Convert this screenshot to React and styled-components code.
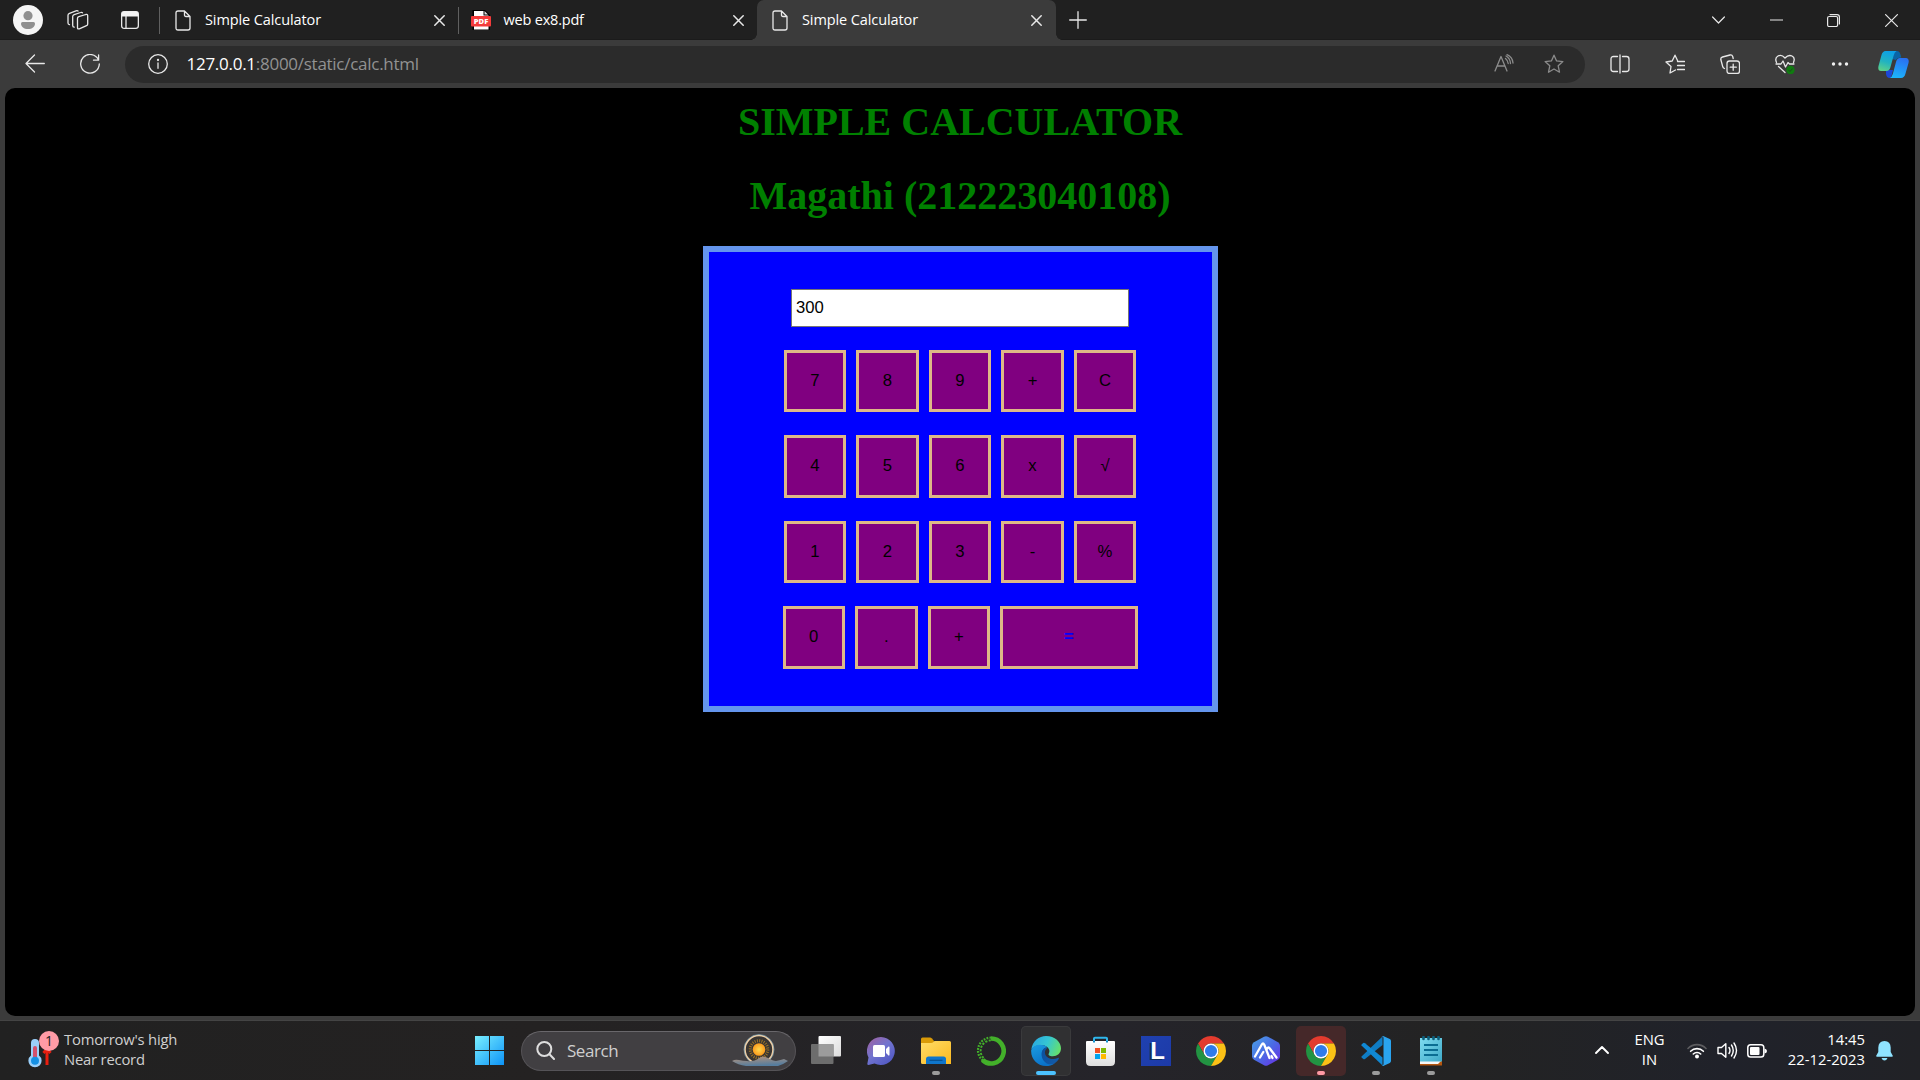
import React from "react";
import styled, { createGlobalStyle } from "styled-components";

const GlobalStyle = createGlobalStyle`
  * { box-sizing: border-box; }
  body { margin: 0; background: #3b3b3b; overflow: hidden; }
  svg { display: block; flex: none; }
`;

const Desktop = styled.div`
  width: 1920px;
  height: 1080px;
  display: flex;
  flex-direction: column;
  background: #3b3b3b;
  font-family: "Open Sans", "Noto Sans", sans-serif;
  color: #fff;
`;

/* ---------- browser window ---------- */

const TabStrip = styled.div`
  height: 40px;
  display: flex;
  background: #202020;
  box-shadow: inset 0 -1px 0 #1b1b1b;
`;

const StripTools = styled.div`
  width: 159px;
  display: flex;
  align-items: center;
  padding-left: 13px;
`;

const StripIcon = styled.div`
  display: flex;
  justify-content: center;
  width: ${(p) => p.$w}px;
`;

const Tab = styled.div`
  position: relative;
  width: 299px;
  display: flex;
  align-items: center;
  padding: 0 ${(p) => p.$right}px 0 ${(p) => p.$left}px;
  gap: ${(p) => p.$gap || 14}px;
  border-left: ${(p) => (p.$divider ? "1px solid transparent" : "0")};
  border-image: ${(p) =>
    p.$divider ? "linear-gradient(#202020 8px, #606060 8px, #606060 33px, #202020 33px) 1" : "none"};
  background: ${(p) => (p.$active ? "#3b3b3b" : "transparent")};
  border-radius: ${(p) => (p.$active ? "7px 7px 0 0" : "0")};
  &::before, &::after {
    content: "";
    display: ${(p) => (p.$active ? "block" : "none")};
    position: absolute;
    bottom: 0;
    width: 6px;
    height: 6px;
  }
  &::before { left: -6px; background: radial-gradient(circle at 0 0, transparent 5.5px, #3b3b3b 6px); }
  &::after { right: -6px; background: radial-gradient(circle at 100% 0, transparent 5.5px, #3b3b3b 6px); }
`;

const TabTitle = styled.span`
  flex: 1;
  font-size: 14.5px;
  letter-spacing: ${(p) => p.$ls}px;
  line-height: 20px;
  white-space: nowrap;
`;

const NewTab = styled.div`
  width: 44px;
  display: flex;
  align-items: center;
  justify-content: center;
`;

const WindowButtons = styled.div`
  margin-left: auto;
  display: flex;
  align-items: center;
`;

const WindowButton = styled.div`
  width: 57.5px;
  display: flex;
  justify-content: center;
`;

const Toolbar = styled.div`
  height: 48px;
  display: flex;
  align-items: center;
`;

const NavButtons = styled.div`
  width: 125px;
  display: flex;
  gap: 35px;
  padding-left: 25px;
`;

const AddressBar = styled.div`
  width: 1460px;
  height: 37px;
  border-radius: 19px;
  background: #2b2b2b;
  display: flex;
  align-items: center;
  padding: 0 21px 0 22.5px;
`;

const Url = styled.div`
  flex: 1;
  margin-left: 19px;
  font-size: 17px;
  letter-spacing: -0.27px;
  line-height: 24px;
  color: #929292;
`;

const Host = styled.span`
  color: #fff;
`;

const AddressActions = styled.div`
  display: flex;
  gap: 30px;
`;

const ToolButtons = styled.div`
  display: flex;
  align-items: center;
  gap: 35px;
  padding-left: 24.5px;
`;

const CopilotButton = styled.div`
  margin-left: -7px;
`;

/* ---------- calculator page ---------- */

const Page = styled.main`
  height: 928px;
  margin: 0 5px;
  border-radius: 10px;
  background: #000;
  display: flex;
  flex-direction: column;
  align-items: center;
  padding-top: 11px;
`;

const Heading = styled.h1`
  margin: 0 0 ${(p) => p.$gap}px;
  font: bold 40px/46px "Liberation Serif", "Times New Roman", serif;
  color: green;
`;

const Calculator = styled.div`
  width: 515px;
  height: 466px;
  border: 6px solid cornflowerblue;
  background: blue;
  display: flex;
  flex-direction: column;
  align-items: center;
  padding-top: 37px;
  font: 16.67px "Liberation Sans", Arial, sans-serif;
`;

const Display = styled.input`
  width: 338px;
  height: 38px;
  margin: 0 0 22.6px;
  padding: 1px 4px;
  border: 1px solid #767676;
  border-radius: 0;
  background: #fff;
  color: #000;
  font: inherit;
  outline: none;
`;

const KeyRow = styled.div`
  display: flex;
  gap: 10px;
  margin-bottom: 23px;
`;

const Key = styled.button`
  width: ${(p) => (p.$wide ? 137.5 : 62.5)}px;
  height: 62.5px;
  padding: 0;
  border: 3px solid burlywood;
  border-radius: 0;
  background: purple;
  color: ${(p) => (p.$wide ? "blue" : "#000")};
  font: inherit;
  font-weight: ${(p) => (p.$wide ? "bold" : "normal")};
`;

/* ---------- taskbar ---------- */

const Taskbar = styled.footer`
  height: 60px;
  margin-top: 4px;
  border-top: 1px solid #444;
  display: flex;
  align-items: center;
  background: linear-gradient(90deg, #212121 0%, #242222 28%, #25242a 58%, #232323 76%, #20222a 90%, #212226 100%);
`;

const Weather = styled.div`
  width: 465px;
  display: flex;
  align-items: center;
  padding-left: 27px;
  gap: 3px;
`;

const SmallLines = styled.div`
  margin-top: -4px;
  font-size: 14.8px;
  line-height: 20px;
  letter-spacing: ${(p) => p.$ls || 0}px;
  text-align: ${(p) => p.$align || "left"};
  color: ${(p) => p.$color || "#fff"};
  white-space: nowrap;
`;

const StartButton = styled.div`
  width: 56px;
  padding-left: 10px;
`;

const SearchBox = styled.div`
  width: 275px;
  height: 40px;
  border-radius: 20px;
  border: 1px solid #555357;
  border-top-color: #69676b;
  background: #413f42;
  display: flex;
  align-items: center;
  padding: 0 7px 0 14px;
`;

const SearchLabel = styled.span`
  flex: 1;
  margin-left: 12px;
  font-size: 17px;
  letter-spacing: -0.45px;
  color: #cfcfcf;
`;

const AppList = styled.div`
  display: flex;
  gap: 5px;
  margin-left: 5px;
`;

const AppSlot = styled.div`
  position: relative;
  width: 50px;
  height: 50px;
  display: flex;
  align-items: center;
  justify-content: center;
  border-radius: 5px;
  padding-right: ${(p) => p.$nudge || 0}px;
  background: ${(p) => p.$bg || "transparent"};
  box-shadow: ${(p) => (p.$bg === "#303032" ? "inset 0 0 0 1px #3a3a3c" : "none")};
`;

const Running = styled.div`
  position: absolute;
  bottom: 1px;
  width: ${(p) => p.$w}px;
  height: 4px;
  border-radius: 2px;
  background: ${(p) => p.$color};
`;

const LetterTile = styled.div`
  width: 30px;
  height: 30px;
  padding-left: 3px;
  background: linear-gradient(135deg, #1f41b0, #1d3aa8);
  display: flex;
  align-items: center;
  justify-content: center;
  font: bold 24px/30px "Liberation Sans", Arial, sans-serif;
  color: #fff;
  text-shadow: -2px 1px 0 #0e2d5c;
`;

const Tray = styled.div`
  margin-left: auto;
  display: flex;
  align-items: center;
  padding-right: 27px;
`;

const TrayChevron = styled.div`
  margin-bottom: 2px;
`;

const Language = styled.div`
  width: 78px;
  padding-left: 3px;
`;

const Status = styled.div`
  display: flex;
  align-items: center;
  gap: 9.5px;
`;

const Clock = styled.div`
  width: 98px;
  margin-right: 11px;
`;

/* ---------- icons ---------- */

const Line = ({ w = 20, h = 20, color = "#e8e8e8", sw = 1.3, children, vb }) => (
  <svg width={w} height={h} viewBox={vb || `0 0 ${w} ${h}`} fill="none" stroke={color} strokeWidth={sw} strokeLinecap="round" strokeLinejoin="round">
    {children}
  </svg>
);

const FileIcon = () => (
  <Line w={16} h={21}>
    <path d="M1 3Q1 1 3 1H9.5L15 6.5V18Q15 20 13 20H3Q1 20 1 18Z M9.5 1V5Q9.5 6.5 11 6.5H15" />
  </Line>
);

const TabClose = () => (
  <Line w={11} h={11} sw={1.5}>
    <path d="M.8.8 10.2 10.2M10.2.8.8 10.2" />
  </Line>
);

const PdfIcon = () => (
  <svg width="20" height="21" viewBox="0 0 20 21">
    <path d="M1.5 0H14L19 5V20H1.5Z" fill="#000" />
    <path d="M3 1H12.5V5.5H17.5V19.5H3Z" fill="#fff" />
    <path d="M13.5 1V4.5H17Z" fill="#ddd" />
    <rect x="0" y="6" width="20" height="10.5" rx="1" fill="#f33b3b" />
    <text x="10" y="14" textAnchor="middle" fontFamily="Open Sans, sans-serif" fontWeight="800" fontSize="7.6" fill="#fff">PDF</text>
  </svg>
);

const ProfileIcon = () => (
  <svg width="30" height="30" viewBox="0 0 30 30">
    <circle cx="15" cy="15" r="15" fill="#f5f5f5" />
    <circle cx="15" cy="10.7" r="4.6" fill="#8f8f8f" />
    <path d="M8 18.5Q8 17 9.5 17H20.5Q22 17 22 18.5C22 22 19 24 15 24S8 22 8 18.5Z" fill="#8f8f8f" />
  </svg>
);

const WorkspacesIcon = () => (
  <Line w={22} h={21}>
    <path d="M10.5 8.3Q10.5 7 11.8 6.6L18.8 4.5Q20.7 4 20.7 5.8V14Q20.7 15.3 19.5 15.7L12.3 18.8Q10.5 19.4 10.5 17.8Z" />
    <path d="M15.5 2.8Q15 2 13.6 2.5L7.2 4.6Q5.7 5.1 5.7 6.6V15.4Q5.7 17 7.2 17.2" />
    <path d="M11 1Q10.4.4 9 .8L2.5 3.3Q1 3.9 1 5.3V13Q1 14.5 2.5 14.7" />
  </Line>
);

const TabActionsIcon = () => (
  <svg width="18" height="18" viewBox="0 0 18 18">
    <rect x=".65" y=".65" width="16.7" height="16.7" rx="2.5" fill="none" stroke="#e8e8e8" strokeWidth="1.3" />
    <path d="M.6 5.5V3Q.6.6 3 .6H15Q17.4.6 17.4 3V5.5Z" fill="#f2f2f2" />
    <path d="M5 5V17.4" stroke="#e8e8e8" strokeWidth="1.3" />
  </svg>
);

const CopilotIcon = () => (
  <svg width="31" height="27" viewBox="0 0 31 27">
    <defs>
      <linearGradient id="cpA" x1=".6" y1="0" x2=".3" y2="1">
        <stop offset="0" stopColor="#0c9fe8" />
        <stop offset=".55" stopColor="#22b3c0" />
        <stop offset="1" stopColor="#5bd08a" />
      </linearGradient>
      <linearGradient id="cpB" x1=".7" y1="0" x2=".4" y2="1">
        <stop offset="0" stopColor="#2a6ff0" />
        <stop offset="1" stopColor="#1cb4fb" />
      </linearGradient>
    </defs>
    <path d="M16 0H19Q21.5 0 22.3 3L23.3 6.5Q19 6.5 18 9L14 8Z" fill="#0a64a6" />
    <path d="M8 19H15L14 23Q13 27 11 27Q8.500 26.500 8 23Z" fill="#1c48d8" />
    <path d="M7.500 0H18.500Q16.500 1 15.500 5L12.500 16Q11.500 20 8.500 20H3Q-.5 20 .5 15L3.500 4Q4.500.3 7.500 0Z" fill="url(#cpA)" />
    <path d="M22 7H28Q31.500 7.500 30.500 12L27.500 22.500Q26.500 26.800 23 27H11.500Q13.800 26.500 14.800 23L18 11Q19 7 22 7Z" fill="url(#cpB)" />
  </svg>
);

const ThermometerIcon = () => (
  <svg width="34" height="40" viewBox="0 0 34 40">
    <path d="M20 17V34" stroke="#e81f10" strokeWidth="3" />
    <path d="M16.500 22L20 18 23.500 22" fill="none" stroke="#e81f10" strokeWidth="3" />
    <path d="M4 12A4 4 0 0 1 12 12V24.500A6.600 6.600 0 1 1 4 24.500Z" fill="#9bd0fa" />
    <rect x="6" y="15" width="4" height="15" rx="2" fill="#d4506c" />
    <circle cx="8" cy="29.700" r="4" fill="#1590e4" />
    <circle cx="22" cy="10" r="10" fill="#ff9ba6" />
    <text x="22" y="15" textAnchor="middle" fontFamily="Open Sans, sans-serif" fontSize="14" fill="#222">1</text>
  </svg>
);

const WindowsIcon = () => (
  <svg width="29" height="29" viewBox="0 0 29 29">
    <defs>
      <linearGradient id="win" x1="0" y1="0" x2="1" y2="1">
        <stop offset="0" stopColor="#79efff" />
        <stop offset="1" stopColor="#0d93f7" />
      </linearGradient>
    </defs>
    <path d="M0 0H14V14H0ZM15 0H29V14H15ZM0 15H14V29H0ZM15 15H29V29H15Z" fill="url(#win)" />
  </svg>
);

const SunriseIcon = () => (
  <svg width="56" height="34" viewBox="0 0 56 34">
    <defs>
      <radialGradient id="sun"><stop offset="0" stopColor="#ffd84d" /><stop offset="1" stopColor="#fb9a1c" /></radialGradient>
      <linearGradient id="hill" x1="0" y1="0" x2=".3" y2="1"><stop offset="0" stopColor="#b99378" /><stop offset="1" stopColor="#567d9e" /></linearGradient>
    </defs>
    <circle cx="27" cy="15.500" r="14" fill="#393532" stroke="#f3cfa3" strokeWidth="1.600" />
    <circle cx="27" cy="15.500" r="15" fill="none" stroke="#8bb9cf" strokeWidth=".6" />
    <circle cx="27" cy="15.500" r="8.800" fill="none" stroke="#9b7328" strokeWidth="3" strokeDasharray="1 1.300" />
    <circle cx="27" cy="15.500" r="6.300" fill="url(#sun)" />
    <path d="M0 27Q3 25 7 26T15 27Q22 28 27 24Q31 21 36 24T44 27Q49 26 52 25Q54 26 56 27Q52 30 46 32H14Q6 31 0 27Z" fill="url(#hill)" />
  </svg>
);

const TaskViewIcon = () => (
  <svg width="30" height="29" viewBox="0 0 30 29">
    <defs><linearGradient id="tv" x1="0" y1="0" x2="1" y2="1"><stop offset="0" stopColor="#fff" /><stop offset="1" stopColor="#dcdcdc" /></linearGradient></defs>
    <rect x="7.500" y="0" width="22.500" height="20.500" rx="1" fill="url(#tv)" />
    <rect x="0" y="8" width="22.500" height="20" rx="1" fill="#6d6d6d" />
    <rect x="7.500" y="8" width="15" height="12.500" fill="#9c9c9c" />
  </svg>
);

const ChatIcon = () => (
  <svg width="28" height="28" viewBox="0 0 28 28">
    <defs><linearGradient id="chat" x1="0" y1="0" x2=".8" y2="1"><stop offset="0" stopColor="#a35f9c" /><stop offset=".5" stopColor="#7274cf" /><stop offset="1" stopColor="#5058c4" /></linearGradient></defs>
    <path d="M14 0A14 14 0 1 1 7.500 26.500L1.500 28Q0 28 .4 26.500L1.500 20.500A14 14 0 0 1 14 0Z" fill="url(#chat)" />
    <rect x="6" y="8" width="12" height="12" rx="1.500" fill="#fff" />
    <path d="M19 12L21.500 9.500Q22.500 9 22.500 10.500V17.500Q22.500 19 21.500 18.500L19 16Z" fill="#fff" />
  </svg>
);

const FolderIcon = () => (
  <svg width="30" height="28" viewBox="0 0 30 28">
    <defs><linearGradient id="fold" x1="0" y1="0" x2="1" y2="1"><stop offset="0" stopColor="#ffdc68" /><stop offset="1" stopColor="#fbb91f" /></linearGradient></defs>
    <path d="M0 2Q0 .5 1.500.5H9Q10 .5 11 1.500L13 4V8H0Z" fill="#d99a08" />
    <path d="M0 6H10Q11.500 6 12.500 5L13.500 4H28.500Q30 4 30 5.500V27H1.500Q0 27 0 25.500Z" fill="url(#fold)" />
    <path d="M5 27V22Q5 19.500 7.500 19.500H22.500Q25 19.500 25 22V27Z" fill="#0f76cc" />
    <path d="M8.500 23.300H21.500" stroke="#07508f" strokeWidth="1.200" />
  </svg>
);

const AnacondaIcon = () => (
  <svg width="30" height="30" viewBox="0 0 30 30" fill="none" stroke="#43b02a">
    <path d="M15 2.500A12.500 12.500 0 1 1 6.500 24" strokeWidth="4.600" />
    <path d="M6.800 24.500A12.800 12.800 0 0 1 15 1.700" strokeWidth="2.200" strokeDasharray="1.800 1.200" />
    <path d="M7.500 22A10.500 10.500 0 0 1 15 4.300" strokeWidth="1.900" strokeDasharray="2.200 1.400" />
  </svg>
);

const EdgeIcon = () => (
  <svg width="30" height="30" viewBox="0 0 30 30">
    <defs>
      <linearGradient id="edT" x1="0" y1=".3" x2="1" y2=".6"><stop offset="0" stopColor="#2aa7e0" /><stop offset=".5" stopColor="#35c6d3" /><stop offset="1" stopColor="#66e06a" /></linearGradient>
      <linearGradient id="edB" x1="0" y1="0" x2=".5" y2="1"><stop offset="0" stopColor="#1b9de2" /><stop offset="1" stopColor="#0a72c9" /></linearGradient>
      <linearGradient id="edD" x1="0" y1="0" x2="1" y2=".5"><stop offset="0" stopColor="#0c4f9c" /><stop offset="1" stopColor="#125aa8" /></linearGradient>
    </defs>
    <path d="M.3 13.500C1.500 5 8 0 15 0C24 0 30 6 30 12.300C30 17.500 26 20.200 21.800 20.200C18 20.200 17 18.700 17.800 17.500C19 15.500 18.500 13 16.500 11.300C12 7.500 4 8.500.3 13.500Z" fill="url(#edT)" />
    <path d="M.2 14C3 8 11 7.500 16.300 11.200C11.500 12 10.500 16 12 20C13.500 25 18 28.500 23.500 27.400C21 29.200 18 30 15 30C6.500 30-.5 23 .2 14Z" fill="url(#edB)" />
    <path d="M15.500 11.300C10.500 12.500 9 19 12.300 24.200C15.300 28.500 20 29.300 23.500 27.400C25.500 26.200 27 24.500 27.800 22.800C28.100 22 27.500 21.600 26.800 21.900C21.500 24.300 15.500 22.200 14.200 18.200C13.500 15.800 14.200 13.600 16 12.500Z" fill="url(#edD)" />
  </svg>
);

const StoreIcon = () => (
  <svg width="29" height="30" viewBox="0 0 29 30">
    <defs><linearGradient id="store" x1="0" y1="0" x2="0" y2="1"><stop offset="0" stopColor="#fff" /><stop offset="1" stopColor="#dedede" /></linearGradient></defs>
    <path d="M8 6V2.500Q8 1.700 9 1.700H20Q21 1.700 21 2.500V6" fill="none" stroke="#2fb6ec" strokeWidth="2" />
    <path d="M0 6Q0 5 1 5H28Q29 5 29 6V25.500Q29 30 24.500 30H4.500Q0 30 0 25.500Z" fill="url(#store)" />
    <path d="M9 12H14V17H9Z" fill="#f25022" /><path d="M15 12H20V17H15Z" fill="#7fba00" />
    <path d="M9 18H14V23H9Z" fill="#00a4ef" /><path d="M15 18H20V23H15Z" fill="#ffb900" />
    <path d="M8 5V6.500M21 5V6.500" stroke="#168fc9" strokeWidth="2" />
  </svg>
);

const ChromeIcon = () => (
  <svg width="30" height="30" viewBox="2 2 44 44">
    <path d="M4.950 13A22 22 0 0 1 43.050 13H24A11 11 0 0 0 14.470 29.500Z" fill="#e33b2e" />
    <path d="M4.950 13L14.470 29.500A11 11 0 0 0 33.530 29.500L24 46A22 22 0 0 1 4.950 13Z" fill="#229342" />
    <path d="M43.050 13A22 22 0 0 1 24 46L33.530 29.500A11 11 0 0 0 24 13Z" fill="#fbc116" />
    <circle cx="24" cy="24" r="11" fill="#fff" />
    <circle cx="24" cy="24" r="8.900" fill="#2f7bea" />
  </svg>
);

const PeaksIcon = () => (
  <svg width="28" height="30" viewBox="0 0 28 30">
    <defs><linearGradient id="peak" x1="0" y1="0" x2="1" y2="1"><stop offset="0" stopColor="#4aa4e8" /><stop offset=".5" stopColor="#4a6be4" /><stop offset="1" stopColor="#6a2be6" /></linearGradient></defs>
    <path d="M12 .7Q14-.4 16 .7L26 6.300Q28 7.500 28 9.500V20.500Q28 22.500 26 23.700L16 29.300Q14 30.400 12 29.300L2 23.700Q0 22.500 0 20.500V9.500Q0 7.500 2 6.300Z" fill="url(#peak)" />
    <path d="M3 20.500L9.800 8.500Q11 6.500 12.200 8.500L17.500 22M8 21.500L11.300 16M15.200 12.500Q16.500 10.500 17.800 12.500L24.500 21.500M19.500 20L20.500 22" fill="none" stroke="#fff" strokeWidth="2.300" strokeLinecap="round" />
  </svg>
);

const CodeIcon = () => (
  <svg width="30" height="30" viewBox="0 0 30 30">
    <path d="M.5 20.500L21.500.5V9L4 23Q3 23.600 2.200 22.900L.6 21.500Q.1 21 .5 20.500Z" fill="#0f7cc4" />
    <path d="M.5 9.500L21.500 29.500V21.500L4 7.200Q3 6.500 2.200 7.100L.6 8.500Q.1 9 .5 9.500Z" fill="#1088d4" />
    <path d="M20.500.7Q21.500-.4 22.800.2L28.800 3.100Q30 3.700 30 5V25Q30 26.300 28.800 26.900L22.800 29.800Q21.500 30.400 20.500 29.300Q22.500 30 22.500 28V2Q22.500 0 20.500.7Z" fill="#2aa4f0" />
  </svg>
);

const NotepadIcon = () => (
  <svg width="22" height="30" viewBox="0 0 22 30">
    <defs><linearGradient id="note" x1="0" y1="0" x2="1" y2="1"><stop offset="0" stopColor="#7fdcf0" /><stop offset="1" stopColor="#3fa9c8" /></linearGradient></defs>
    <path d="M0 25H22V29.500H0Z" fill="#b5560f" />
    <path d="M0 24H22L18 28H0Z" fill="#f7f7f7" />
    <path d="M0 2H22V25.500H0Z" fill="url(#note)" />
    <path d="M3.500 1V3M8.500 1V3M13.500 1V3M18.500 1V3" stroke="#0c5f7c" strokeWidth="2.600" strokeLinecap="round" />
    <path d="M4 9H18M4 14H18M4 19H18" stroke="#0b6d92" strokeWidth="1.800" />
  </svg>
);

const WifiIcon = () => (
  <svg width="20" height="16" viewBox="0 0 20 16" fill="none" strokeLinecap="round" strokeWidth="1.600">
    <path d="M1 5.500A12.500 12.500 0 0 1 19 5.500" stroke="#5d5d60" />
    <path d="M3.600 8.300A9 9 0 0 1 16.400 8.300M6.300 11A5.200 5.200 0 0 1 13.700 11" stroke="#fff" />
    <circle cx="10" cy="13.600" r="2" fill="#fff" />
  </svg>
);

const BatteryIcon = () => (
  <svg width="20" height="14" viewBox="0 0 20 14">
    <rect x=".8" y=".8" width="16" height="12.200" rx="2.800" fill="none" stroke="#fff" strokeWidth="1.500" />
    <rect x="3" y="3" width="9.500" height="8" rx="1" fill="#fff" />
    <path d="M17.500 4.500Q20 5 20 7T17.500 9.500Z" fill="#fff" />
  </svg>
);

const BellIcon = () => (
  <svg width="17" height="20" viewBox="0 0 17 20">
    <path d="M8.500 0Q14.500.3 14.700 6.500V11L16.800 14.800Q17 15.800 16 15.800H1Q0 15.800.2 14.800L2.300 11V6.500Q2.500.3 8.500 0Z" fill="#8fe3ff" />
    <path d="M5.500 17H11.500Q10.500 19.500 8.500 19.500T5.500 17Z" fill="#8fe3ff" />
  </svg>
);

const starPath = "M10 1.200L12.600 6.900 18.900 7.600 14.200 11.800 15.500 18.200 10 15 4.500 18.200 5.800 11.800 1.100 7.600 7.400 6.900Z";

/* ---------- data ---------- */

const tabs = [
  { title: "Simple Calculator", icon: <FileIcon />, left: 15, right: 13, ls: -0.1, divider: true },
  { title: "web ex8.pdf", icon: <PdfIcon />, left: 11.5, right: 13, gap: 13, ls: -0.2, divider: true },
  { title: "Simple Calculator", icon: <FileIcon />, left: 15, right: 14, ls: -0.1, active: true },
];

const keys = [
  ["7", "8", "9", "+", "C"],
  ["4", "5", "6", "x", "√"],
  ["1", "2", "3", "-", "%"],
  ["0", ".", "+", "="],
];

const apps = [
  { icon: <TaskViewIcon /> },
  { icon: <ChatIcon />, nudge: 1 },
  { icon: <FolderIcon />, run: 8, color: "#9b9b9b" },
  { icon: <AnacondaIcon /> },
  { icon: <EdgeIcon />, bg: "#303032", run: 20, color: "#4cc2ff" },
  { icon: <StoreIcon />, nudge: 1 },
  { icon: <LetterTile>L</LetterTile> },
  { icon: <ChromeIcon /> },
  { icon: <PeaksIcon /> },
  { icon: <ChromeIcon />, bg: "#452829", run: 8, color: "#ff99a4" },
  { icon: <CodeIcon />, run: 8, color: "#9b9b9b" },
  { icon: <NotepadIcon />, run: 8, color: "#9b9b9b" },
];

export default function App() {
  return (
    <Desktop>
      <GlobalStyle />
      <TabStrip>
        <StripTools>
          <ProfileIcon />
          <StripIcon $w={70}><WorkspacesIcon /></StripIcon>
          <StripIcon $w={34}><TabActionsIcon /></StripIcon>
        </StripTools>
        {tabs.map((t, i) => (
          <Tab key={i} $left={t.left} $right={t.right} $gap={t.gap} $active={t.active} $divider={t.divider}>
            {t.icon}
            <TabTitle $ls={t.ls}>{t.title}</TabTitle>
            <TabClose />
          </Tab>
        ))}
        <NewTab>
          <Line w={18} h={18}><path d="M9 .7V17.300M.7 9H17.300" /></Line>
        </NewTab>
        <WindowButtons>
          <WindowButton><Line w={13} h={8} sw={1.2}><path d="M.6 1L6.500 7 12.400 1" /></Line></WindowButton>
          <WindowButton><Line w={13} h={2} sw={1.2}><path d="M.5 1H12.500" /></Line></WindowButton>
          <WindowButton>
            <Line w={13} h={13} sw={1.2}>
              <rect x=".6" y="2.500" width="10" height="10" rx="1.500" />
              <path d="M3 .6H10Q12.400.6 12.400 3V10" />
            </Line>
          </WindowButton>
          <WindowButton><Line w={13} h={13} sw={1.2}><path d="M.6.6 12.400 12.400M12.400.6.6 12.400" /></Line></WindowButton>
        </WindowButtons>
      </TabStrip>
      <Toolbar>
        <NavButtons>
          <Line><path d="M19.300 9.500H1M9.500 1L1 9.500 9.500 18" /></Line>
          <Line><path d="M18.500 6A9.300 9.300 0 1 0 19.300 10M18.600 1V6.200H13.500" /></Line>
        </NavButtons>
        <AddressBar>
          <Line><circle cx="10" cy="10" r="9.300" /><path d="M10 9V14.300" /><circle cx="10" cy="6" r=".5" /></Line>
          <Url><Host>127.0.0.1</Host>:8000/static/calc.html</Url>
          <AddressActions>
            <Line color="#8c8c8c">
              <path d="M1 17L7 2.500 13 17M3.200 12H10.800M11.500 4.500Q14 6.500 14.200 9.500M12 2Q16 4 16.500 9.500M13 .7Q18.500 3 19 9" />
            </Line>
            <Line color="#8c8c8c"><path d={starPath} /></Line>
          </AddressActions>
        </AddressBar>
        <ToolButtons>
          <Line><path d="M7.500 2.500H3.500Q1 2.500 1 5V15Q1 17.500 3.500 17.500H7.500M12.500 2.500H16.500Q19 2.500 19 5V15Q19 17.500 16.500 17.500H12.500M10 1V19" /></Line>
          <Line>
            <path d="M10.500 16L5 19 6 12.500 1 8 7.200 7 10 1.200 12.500 6.500M12.500 7.500H19.500M12.500 11.500H19.500M12.500 15.500H19.500" />
          </Line>
          <Line>
            <rect x="7" y="7" width="12.500" height="12.500" rx="2.500" />
            <path d="M13.200 10.200V16.300M10.200 13.200H16.300M4.500 14.500Q3 14 2.700 12.500L.8 5.500Q.5 3.500 2.500 3L10 1Q12 .5 12.700 2.500L13.200 4.500" />
          </Line>
          <Line>
            <path d="M1.500 8.500Q-.5 4 3 2T10 4Q13.500.3 17 2T18.500 8.500M1 10H6L8 7 10.500 13 13 8.500 14.500 10H19M3.500 12.500L10 18.500" />
            <circle cx="15.500" cy="16" r="4.200" fill="#107c10" stroke="none" />
            <path d="M13.700 16.200L15 17.500 17.300 14.800" stroke="#1d4a1d" strokeWidth="1" />
          </Line>
          <svg width="20" height="20" viewBox="0 0 20 20" fill="#f0f0f0"><circle cx="3.500" cy="10" r="1.700" /><circle cx="10" cy="10" r="1.700" /><circle cx="16.500" cy="10" r="1.700" /></svg>
          <CopilotButton><CopilotIcon /></CopilotButton>
        </ToolButtons>
      </Toolbar>
      <Page>
        <Heading $gap={28}>SIMPLE CALCULATOR</Heading>
        <Heading $gap={27}>Magathi (212223040108)</Heading>
        <Calculator>
          <Display defaultValue="300" />
          {keys.map((row, i) => (
            <KeyRow key={i}>
              {row.map((k, j) => <Key key={j} $wide={k === "="}>{k}</Key>)}
            </KeyRow>
          ))}
        </Calculator>
      </Page>
      <Taskbar>
        <Weather>
          <ThermometerIcon />
          <SmallLines $color="#cfcfcf" $ls={-0.2}>Tomorrow's high<br />Near record</SmallLines>
        </Weather>
        <StartButton><WindowsIcon /></StartButton>
        <SearchBox>
          <Line w={19} h={19} sw={2} color="#dedede"><circle cx="8.300" cy="8" r="7" /><path d="M13.500 13.300L18 18" /></Line>
          <SearchLabel>Search</SearchLabel>
          <SunriseIcon />
        </SearchBox>
        <AppList>
          {apps.map((a, i) => (
            <AppSlot key={i} $bg={a.bg} $nudge={a.nudge}>
              {a.icon}
              {a.run && <Running $w={a.run} $color={a.color} />}
            </AppSlot>
          ))}
        </AppList>
        <Tray>
          <TrayChevron><Line w={14} h={8} sw={1.9} color="#fff"><path d="M1 7L7 1 13 7" /></Line></TrayChevron>
          <Language><SmallLines $align="center">ENG<br />IN</SmallLines></Language>
          <Status>
            <WifiIcon />
            <Line w={21} h={17} sw={1.400} color="#fff">
              <path d="M1 5.500H4.500L8.800 1.800V15.200L4.500 11.500H1Z M12 5.500Q14 8.500 12 11.500M14.500 3Q18 8.500 14.500 14M17 1Q22 8.500 17 16" />
            </Line>
            <BatteryIcon />
          </Status>
          <Clock><SmallLines $align="right">14:45<br />22-12-2023</SmallLines></Clock>
          <BellIcon />
        </Tray>
      </Taskbar>
    </Desktop>
  );
}
